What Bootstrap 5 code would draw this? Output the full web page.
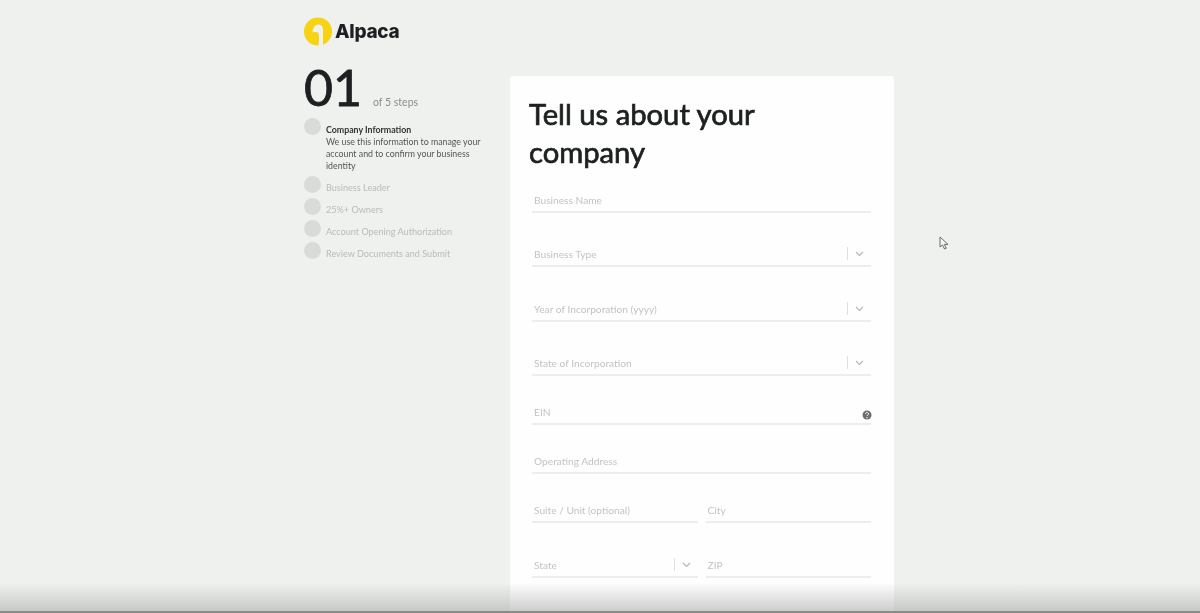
<!DOCTYPE html>
<html lang="en">
<head>
  <meta charset="UTF-8" />
  <meta name="viewport" content="width=device-width, initial-scale=1.0"/>
  <title>Alpaca - Company Information</title>
  <link href="https://cdn.jsdelivr.net/npm/bootstrap@5.3.0/dist/css/bootstrap.min.css" rel="stylesheet"/>
  <style>
    html, body {
      height: 613px;
      overflow: hidden;
    }
    body {
      background: #eff1ef;
      font-family: Lato, "Liberation Sans", sans-serif;
      color: #1d1f20;
    }
    .page-wrap {
      width: 590px;
      height: 613px;
      overflow: hidden;
      margin-left: 304px;
      padding-top: 17px;
      filter: blur(.6px);
    }
    .logo-row {
      height: 29px;
      margin-bottom: 30px;
    }
    .logo-name {
      font-family: Inter, sans-serif;
      font-size: 19px;
      font-weight: 800;
      letter-spacing: -.3px;
      line-height: 29px;
      margin-left: 3px;
    }
    .side-col {
      width: 206px;
      flex: none;
    }
    .step-big {
      font-size: 50px;
      line-height: 23px;
      -webkit-text-stroke: .8px #1d1f20;
    }
    .step-of {
      font-size: 10.5px;
      color: #8b8d8d;
      margin-left: 11px;
    }
    .step-head {
      height: 42px;
    }
    .step-item {
      min-height: 22px;
      font-size: 9.1px;
      line-height: 12px;
      color: #b9bbba;
    }
    .step-dot {
      width: 17px;
      height: 17px;
      border-radius: 50%;
      background: #d9dbd9;
      flex: none;
      margin-right: 5px;
    }
    .step-label {
      padding-top: 6px;
      width: 165px;
    }
    .step-item.is-active {
      font-size: 8.8px;
      color: #555;
      margin-bottom: 4px;
    }
    .step-item.is-active b {
      color: #333;
      font-weight: 700;
    }
    .form-panel {
      width: 384px;
      height: 600px;
      background: #fefefe;
      border-radius: 3px;
      padding: 19px 23px 0 22px;
    }
    .form-title {
      font-size: 29.2px;
      font-weight: 400;
      line-height: 38px;
      margin: 0 0 21px -3px;
      color: #1d2021;
      -webkit-text-stroke: .7px #1d2021;
    }
    .field-line {
      border-bottom: 2px solid #ecedec;
      height: 21px;
      padding-top: 1px;
      font-size: 10.2px;
      line-height: 14px;
      color: #c2c4c3;
      padding-left: 2px;
    }
    .gap-big { margin-bottom: 33px; }
    .gap-wide { margin-bottom: 34px; }
    .gap-small { margin-bottom: 28px; }
    .field-sep {
      width: 1px;
      height: 13px;
      background: #dfe0df;
      margin-right: 7px;
    }
    .chev-pad { width: 7px; }
    .help-mark {
      width: 10px;
      height: 10px;
      margin-top: 5px;
      margin-right: -1px;
    }
    .cursor-mark {
      position: absolute;
      left: 939px;
      top: 236px;
    }
    .bottom-shade {
      position: absolute;
      left: 0;
      right: 0;
      bottom: 0;
      height: 30px;
      background: linear-gradient(to bottom, rgba(180,182,180,0), rgba(180,182,180,.68));
      border-bottom: 2px solid #8a8c8a;
    }
  </style>
</head>
<body>

  <div class="page-wrap">
    <div class="logo-row d-flex align-items-center">
      <svg width="28" height="29" viewBox="0 0 28 29">
        <circle cx="14" cy="14.5" r="14" fill="#f6d313"/>
        <path d="M8.500 15.500C8.800 10.500 11.200 7.500 14.500 7.500 17.500 7.500 19 9.800 19 12.500V28L14.500 29C15.500 24 15 19 14.500 15.800 13 14.800 10.500 15 8.500 15.500z" fill="#eff1ef"/>
      </svg>
      <span class="logo-name">Alpaca</span>
    </div>

    <div class="d-flex">
      <div class="side-col">
        <div class="step-head d-flex align-items-baseline">
          <span class="step-big">01</span>
          <span class="step-of">of 5 steps</span>
        </div>
        <div class="step-item is-active d-flex">
          <span class="step-dot"></span>
          <div class="step-label"><b>Company Information</b><br>We use this information to manage your account and to confirm your business identity</div>
        </div>
        <div class="step-item d-flex"><span class="step-dot"></span><div class="step-label">Business Leader</div></div>
        <div class="step-item d-flex"><span class="step-dot"></span><div class="step-label">25%+ Owners</div></div>
        <div class="step-item d-flex"><span class="step-dot"></span><div class="step-label">Account Opening Authorization</div></div>
        <div class="step-item d-flex"><span class="step-dot"></span><div class="step-label">Review Documents and Submit</div></div>
      </div>

      <div class="form-panel">
        <h1 class="form-title">Tell us about your company</h1>
        <div class="field-line gap-big">Business Name</div>
        <div class="field-line gap-wide d-flex justify-content-between align-items-start">
          <span>Business Type</span>
          <span class="d-flex align-items-center">
            <span class="field-sep"></span>
            <svg width="9" height="6" viewBox="0 0 9 6"><path d="M1 1l3.500 3.500L8 1" fill="none" stroke="#b5b7b6" stroke-width="1.200"/></svg>
            <span class="chev-pad"></span>
          </span>
        </div>
        <div class="field-line gap-big d-flex justify-content-between align-items-start">
          <span>Year of Incorporation (yyyy)</span>
          <span class="d-flex align-items-center">
            <span class="field-sep"></span>
            <svg width="9" height="6" viewBox="0 0 9 6"><path d="M1 1l3.500 3.500L8 1" fill="none" stroke="#b5b7b6" stroke-width="1.200"/></svg>
            <span class="chev-pad"></span>
          </span>
        </div>
        <div class="field-line gap-small d-flex justify-content-between align-items-start">
          <span>State of Incorporation</span>
          <span class="d-flex align-items-center">
            <span class="field-sep"></span>
            <svg width="9" height="6" viewBox="0 0 9 6"><path d="M1 1l3.500 3.500L8 1" fill="none" stroke="#b5b7b6" stroke-width="1.200"/></svg>
            <span class="chev-pad"></span>
          </span>
        </div>
        <div class="field-line gap-small d-flex justify-content-between align-items-start">
          <span>EIN</span>
          <svg class="help-mark" viewBox="0 0 10 10">
            <circle cx="5" cy="5" r="4.500" fill="#6d6f6e"/>
            <path d="M3.500 4c0-2 3-2 3 0 0 1-1.500 1-1.500 2" fill="none" stroke="#fff" stroke-width="1"/>
            <circle cx="5" cy="7.800" r=".7" fill="#fff"/>
          </svg>
        </div>
        <div class="field-line gap-small">Operating Address</div>
        <div class="d-flex gap-2 gap-wide">
          <div class="field-line flex-fill w-50">Suite / Unit (optional)</div>
          <div class="field-line flex-fill w-50">City</div>
        </div>
        <div class="d-flex gap-2 gap-big">
          <div class="field-line flex-fill w-50 d-flex justify-content-between align-items-start">
            <span>State</span>
            <span class="d-flex align-items-center">
              <span class="field-sep"></span>
              <svg width="9" height="6" viewBox="0 0 9 6"><path d="M1 1l3.500 3.500L8 1" fill="none" stroke="#b5b7b6" stroke-width="1.200"/></svg>
              <span class="chev-pad"></span>
            </span>
          </div>
          <div class="field-line flex-fill w-50">ZIP</div>
        </div>
        <div class="field-line">Phone Number</div>
      </div>
    </div>
  </div>

  <svg class="cursor-mark" width="10" height="14" viewBox="0 0 10 14">
    <path d="M1 1v10l2.500-2 2 4 1.800-.8-2-3.800H9z" fill="#f4f4f4" stroke="#6a6c6b" stroke-width="1"/>
  </svg>
  <div class="bottom-shade"></div>

  <script src="https://cdn.jsdelivr.net/npm/bootstrap@5.3.0/dist/js/bootstrap.bundle.min.js"></script>
</body>
</html>
